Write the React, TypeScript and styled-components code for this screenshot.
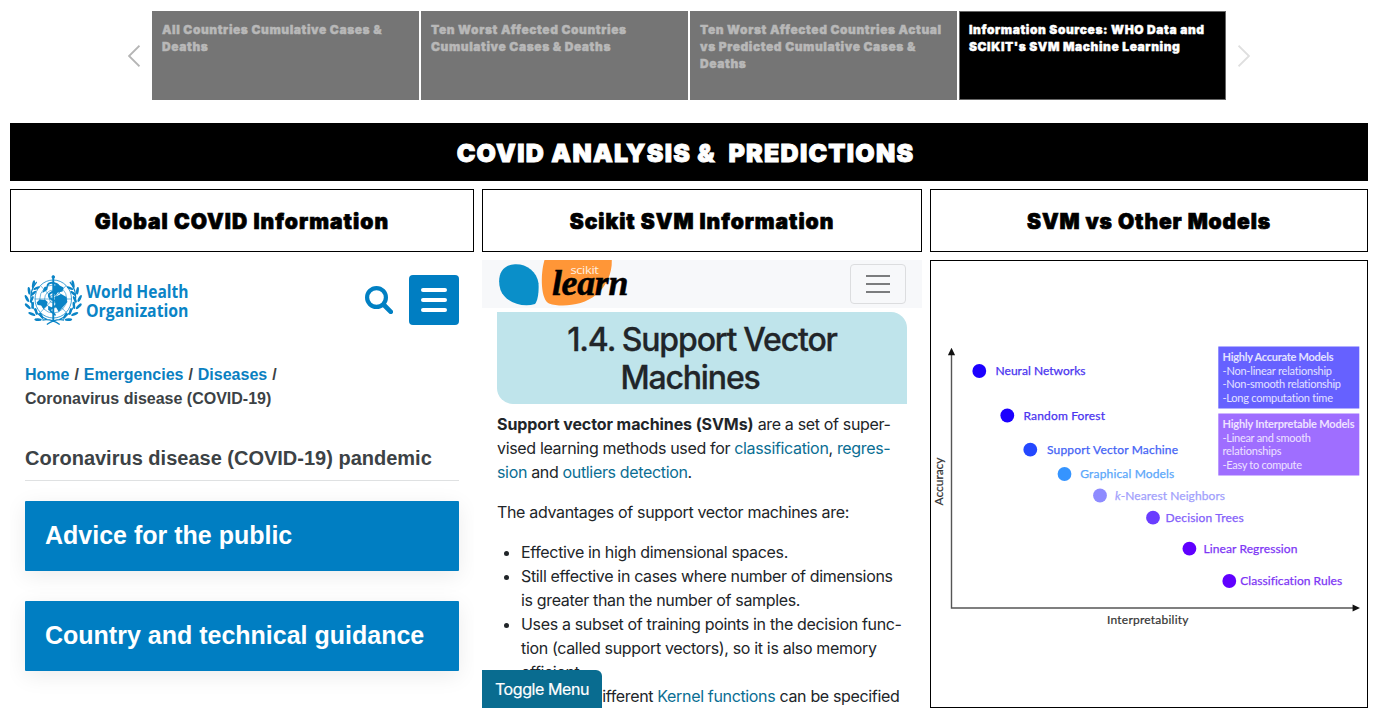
import React from "react";
import styled, { createGlobalStyle } from "styled-components";

const GlobalStyle = createGlobalStyle`
  * { box-sizing: border-box; }
  body { margin: 0; background: #fff; font-family: "Liberation Sans", Arial, sans-serif; }
  a { text-decoration: none; color: inherit; }
`;

const Dashboard = styled.main`
  width: 1377px;
  height: 722px;
  padding: 11px 9px 14px 10px;
  display: flex;
  flex-direction: column;
  overflow: hidden;
  background: #fff;
`;

const StoryNav = styled.nav`
  height: 89px;
  display: flex;
  justify-content: center;
  align-items: center;
  gap: 12px;
  flex: none;
`;

const Arrow = styled.svg<{ $color: string }>`
  width: 12px;
  height: 22px;
  fill: none;
  stroke: ${(p) => p.$color};
  stroke-width: 1.9;
`;

const Tabs = styled.div`
  display: flex;
  gap: 2px;
  height: 100%;
`;

const Tab = styled.div<{ $active?: boolean }>`
  width: 267px;
  height: 89px;
  padding: 9px;
  border: 1px solid ${(p) => (p.$active ? "#666" : "#757575")};
  background: ${(p) => (p.$active ? "#000" : "#757575")};
  color: ${(p) => (p.$active ? "#fff" : "#b8b8b8")};
  font: 900 12px/17px Inter, "Arial Black", sans-serif;
  letter-spacing: 0.58px;
  -webkit-text-stroke: 0.4px currentColor;
  white-space: pre-line;
`;

const Banner = styled.h1`
  margin: 23px 0 8px;
  height: 58px;
  flex: none;
  display: flex;
  align-items: center;
  justify-content: center;
  padding: 1px 7px 0 0;
  background: #000;
  color: #fff;
  font: 900 25px/34px Inter, "Arial Black", sans-serif;
  letter-spacing: 1.25px;
  -webkit-text-stroke: 0.9px currentColor;
  white-space: pre;
`;

const Columns = styled.div`
  display: grid;
  grid-template-columns: 464px 440px 438px;
  grid-template-rows: 63px 448px;
  gap: 8px;
`;

const Heading = styled.h2<{ $spacing: number }>`
  margin: 0;
  border: 1px solid #000;
  display: flex;
  align-items: center;
  justify-content: center;
  padding-top: 2px;
  font: 900 21px/30px Inter, "Arial Black", sans-serif;
  letter-spacing: ${(p) => p.$spacing}px;
  -webkit-text-stroke: 0.7px currentColor;
  color: #000;
`;

const WhoPanel = styled.section`
  padding: 15px;
  overflow: hidden;
  color: #3c4245;
`;

const WhoHeader = styled.header`
  display: flex;
  align-items: center;
  height: 50px;
`;

const WhoLogo = styled.svg`
  width: 166px;
  height: 50px;
  margin-right: auto;
  overflow: visible;
`;

const SearchIcon = styled.svg`
  width: 28px;
  height: 28px;
  margin-right: 16px;
  fill: none;
  stroke: #0180c3;
`;

const MenuButton = styled.button`
  width: 50px;
  height: 50px;
  padding: 0;
  border: 0;
  border-radius: 4px;
  background: #007ec2;
  display: flex;
  flex-direction: column;
  align-items: center;
  justify-content: center;
  gap: 6px;
`;

const MenuBar = styled.span`
  width: 26px;
  height: 4px;
  border-radius: 2px;
  background: #fff;
`;

const Breadcrumb = styled.div`
  margin-top: 38px;
  font-size: 16px;
  line-height: 24px;
  font-weight: 700;
`;

const Crumb = styled.a`
  color: #0a80c1;
`;

const Slash = styled.span`
  padding: 0 0.5px;
`;

const PageTitle = styled.h3`
  margin: 33px 0 20px;
  height: 37px;
  border-bottom: 1px solid #dfe1e2;
  font-size: 20px;
  line-height: 28px;
  font-weight: 700;
`;

const TopicLink = styled.a`
  display: flex;
  align-items: center;
  height: 70px;
  margin-bottom: 30px;
  padding: 0 20px 2px;
  background: #007ec2;
  color: #fff;
  font-size: 25px;
  font-weight: 700;
  white-space: nowrap;
  border-radius: 1px;
  box-shadow: 0 5px 22px rgba(0, 0, 0, 0.08);
`;

const ScikitPanel = styled.section`
  position: relative;
  overflow: hidden;
  color: #212529;
  font: 400 16px/24px Inter, sans-serif;
  letter-spacing: -0.34px;
`;

const ScikitHeader = styled.header`
  height: 48px;
  padding: 0 16px;
  display: flex;
  justify-content: space-between;
  align-items: center;
  background: #f7f8fa;
`;

const ScikitLogo = styled.svg`
  width: 134px;
  height: 48px;
`;

const Toggler = styled.button`
  width: 56px;
  height: 40px;
  padding: 0;
  border: 1px solid #dcdddf;
  border-radius: 4px;
  background: transparent;
  display: flex;
  flex-direction: column;
  align-items: center;
  justify-content: center;
  gap: 6px;
`;

const TogglerBar = styled.span`
  width: 24px;
  height: 2px;
  background: #7b7c7e;
`;

const TitleBox = styled.h3`
  margin: 4px 15px 0;
  height: 92px;
  padding-top: 9px;
  border-radius: 0 16px 0 16px;
  background: #bfe4eb;
  text-align: center;
  font-size: 32px;
  line-height: 38px;
  font-weight: 500;
  letter-spacing: -1.15px;
  word-spacing: -0.5px;
  -webkit-text-stroke: 0.3px currentColor;
`;

const TitleLine = styled.span<{ $trailing?: number }>`
  display: block;
  padding-right: ${(p) => p.$trailing ?? 0}px;
`;

const Paragraph = styled.p`
  margin: 8px 15px 16px;
  white-space: pre;
`;

const Strong = styled.b`
  letter-spacing: -0.09px;
`;

const List = styled.ul`
  margin: 0 0 0 15px;
  padding: 0 0 0 24px;
  white-space: pre;
`;

const Lead = styled.span`
  padding-right: 1px;
`;

const DocLink = styled.a`
  color: #0a6e93;
`;

const ToggleMenu = styled.button`
  position: absolute;
  left: 0;
  bottom: 0;
  width: 120px;
  height: 38px;
  padding: 0;
  border: 0;
  border-radius: 0 6px 0 0;
  background: #096c90;
  color: #fff;
  font: inherit;
  letter-spacing: -0.42px;
  -webkit-text-stroke: 0.2px currentColor;
`;

const ChartPanel = styled.section`
  border: 1px solid #000;
`;

const Chart = styled.svg`
  display: block;
  width: 436px;
  height: 446px;
  font-family: Lato, "Open Sans", sans-serif;
  font-variant-ligatures: none;
`;

const tabs = [
  "All Countries Cumulative Cases &\nDeaths",
  "Ten Worst Affected Countries\nCumulative Cases & Deaths",
  "Ten Worst Affected Countries Actual\nvs Predicted Cumulative Cases &\nDeaths",
  "Information Sources: WHO Data and\nSCIKIT's SVM Machine Learning",
];

type Model = { name: React.ReactNode; cx: number; cy: number; x: number; y: number; w: number; dot: string; text: string };

const models: Model[] = [
  { name: "Neural Networks", cx: 979.3, cy: 371, x: 995.5, y: 375.4, w: 90, dot: "#1c00ff", text: "#4a33f0" },
  { name: "Random Forest", cx: 1007.3, cy: 415.5, x: 1023.5, y: 419.6, w: 81.5, dot: "#1c00ff", text: "#4a33f0" },
  { name: "Support Vector Machine", cx: 1030.3, cy: 449.7, x: 1047, y: 454, w: 131, dot: "#2448ff", text: "#4463f5" },
  { name: "Graphical Models", cx: 1064.5, cy: 474, x: 1080.3, y: 478.4, w: 94, dot: "#3594ff", text: "#5ba7fa" },
  { name: <><tspan fontStyle="italic">k</tspan>-Nearest Neighbors</>, cx: 1100, cy: 495.5, x: 1115, y: 499.8, w: 110, dot: "#8e8bff", text: "#a29ffc" },
  { name: "Decision Trees", cx: 1153, cy: 517.7, x: 1165.6, y: 522, w: 78, dot: "#6a3dff", text: "#8460fa" },
  { name: "Linear Regression", cx: 1189.4, cy: 548.7, x: 1203.4, y: 553.1, w: 94, dot: "#6000ff", text: "#7d35f5" },
  { name: "Classification Rules", cx: 1229.3, cy: 581, x: 1240.2, y: 585.2, w: 102, dot: "#6000ff", text: "#7d35f5" },
];

const notes = [
  { y: 346.5, fill: "#6661ff", ink: "#e3e2ff", lines: [["Highly Accurate Models", 111], ["-Non-linear relationship", 109.5], ["-Non-smooth relationship", 118.5], ["-Long computation time", 110.5]] },
  { y: 413.5, fill: "#9f6eff", ink: "#eee2ff", lines: [["Highly Interpretable Models", 132], ["-Linear and smooth", 88.5], ["relationships", 59], ["-Easy to compute", 79.5]] },
] as const;

const leaves = [
  [9, 11, 40], [5, 17, 20], [3, 24, 0], [4, 31, -20], [8, 38, -40], [14, 43, -60],
];

const Emblem = () => (
  <g stroke="#0a84c6" fill="none" strokeWidth="0.8" transform="translate(1.100 0) scale(0.96 1)">
    <circle cx="28.3" cy="24" r="19" />
    <circle cx="28.3" cy="24" r="14" strokeWidth="0.6" />
    <circle cx="28.3" cy="24" r="9" strokeWidth="0.6" />
    <circle cx="28.3" cy="24" r="4" strokeWidth="0.6" />
    <path strokeWidth="0.6" d="M9.3 24h38M14.9 10.6l26.8 26.8M41.7 10.6L14.9 37.4" />
    <path fill="#0a84c6" stroke="none" d="M11 27.500l3-3 6 .5 2.500 2-1 4-3.500 3-2-3.500-4-.5zM29 11l4-1.500 6 3-1 4-5 1-2 3-3-2zM30 22l6.500-3 5.500 3 1 5-5.500 6-3.500 4-3.500-6zM19 12l4-1-1 4-5 3zM23 31l3 1-1 4-2-1z" />
    <path strokeWidth="2" d="M28.300 1v46" />
    <circle cx="28.3" cy="2" r="1.4" fill="#0a84c6" />
    <path strokeWidth="1.900" d="M22.300 11c0-3 4-4 8-2.500 5 1.500 5 6 0 7.500-5 1.500-8 3-6 6.500 2 3 8 2.500 8 6s-7 3.500-7 6.500 5 2.500 5 5.500" />
    {[1, -1].map((side) => (
      <g key={side} transform={side === 1 ? undefined : "translate(56.6 0) scale(-1 1)"}>
        <path strokeWidth="1.300" d="M11 7C1 18 3 38 22 44.500M17 45c6-1 13 1 18 4.500" />
        {leaves.map(([x, y, angle]) => (
          <g key={y} fill="#0a84c6" stroke="none" transform={`translate(${x} ${y}) rotate(${angle})`}>
            <ellipse cx="-1.700" cy="-1.500" rx="1.400" ry="3.900" transform="rotate(-28)" />
            <ellipse cx="2.700" cy="-1" rx="1.300" ry="3.600" transform="rotate(28)" />
          </g>
        ))}
      </g>
    ))}
  </g>
);

export default function App() {
  return (
    <>
      <GlobalStyle />
      <Dashboard>
        <StoryNav>
          <Arrow $color="#b5b5b5" viewBox="0 0 12 22"><path d="M11.500 .7L1 11l10.500 10.300" /></Arrow>
          <Tabs>
            {tabs.map((label, i) => (
              <Tab key={label} $active={i === 3}>{label}</Tab>
            ))}
          </Tabs>
          <Arrow $color="#dfdfdf" viewBox="0 0 12 22"><path d="M.5 .7L11 11 .5 21.300" /></Arrow>
        </StoryNav>
        <Banner>{"COVID ANALYSIS &  PREDICTIONS"}</Banner>
        <Columns>
          <Heading $spacing={1.04}>Global COVID Information</Heading>
          <Heading $spacing={0.95}>Scikit SVM Information</Heading>
          <Heading $spacing={0.88}>SVM vs Other Models</Heading>

          <WhoPanel>
            <WhoHeader>
              <WhoLogo viewBox="0 0 166 50">
                <Emblem />
                <g fill="#0a84c6" fontFamily="Open Sans" fontWeight="700" fontSize="18">
                  <text x="61" y="23" textLength="102.500" lengthAdjust="spacingAndGlyphs">World Health</text>
                  <text x="61" y="41.700" textLength="102.500" lengthAdjust="spacingAndGlyphs">Organization</text>
                </g>
              </WhoLogo>
              <SearchIcon viewBox="0 0 28 28">
                <circle cx="11.500" cy="11.500" r="9.400" strokeWidth="4.200" />
                <path d="M19 19l6.800 6.800" strokeWidth="4.600" strokeLinecap="round" />
              </SearchIcon>
              <MenuButton aria-label="Menu"><MenuBar /><MenuBar /><MenuBar /></MenuButton>
            </WhoHeader>
            <Breadcrumb>
              <Crumb>Home</Crumb> <Slash>/</Slash> <Crumb>Emergencies</Crumb> <Slash>/</Slash> <Crumb>Diseases</Crumb> <Slash>/</Slash>
              <br />
              Coronavirus disease (COVID-19)
            </Breadcrumb>
            <PageTitle>Coronavirus disease (COVID-19) pandemic</PageTitle>
            <TopicLink>Advice for the public</TopicLink>
            <TopicLink>Country and technical guidance</TopicLink>
          </WhoPanel>

          <ScikitPanel>
            <ScikitHeader>
              <ScikitLogo viewBox="0 0 134 48">
                <path fill="#0a8fc9" d="M37 44C24 48 7 42 2.500 30-1.500 17 3 5 17 4.200c11-.6 22 7 23.500 19 .5 8-.5 17-3.500 20.800z" />
                <path fill="#ff9637" d="M46.500 0h67.300c.5 14-6 27-16 35C86 45 64 48 51 43.500 43 40 42 15 46.500 0z" />
                <text x="72.500" y="14" fill="#fff0e2" fontFamily="Open Sans" fontSize="11" textLength="28" lengthAdjust="spacingAndGlyphs">scikit</text>
                <text x="54" y="35" fill="#000" stroke="#000" strokeWidth="0.500" fontFamily="Liberation Serif" fontStyle="italic" fontWeight="700" fontSize="35" textLength="76" lengthAdjust="spacingAndGlyphs">learn</text>
              </ScikitLogo>
              <Toggler aria-label="Toggle navigation"><TogglerBar /><TogglerBar /><TogglerBar /></Toggler>
            </ScikitHeader>
            <TitleBox>
              <TitleLine>1.4. Support Vector</TitleLine>
              <TitleLine $trailing={24}>Machines</TitleLine>
            </TitleBox>
            <Paragraph>
              <Strong>Support vector machines (SVMs)</Strong> are a set of super-{"\n"}
              vised learning methods used for <DocLink>classification</DocLink>, <DocLink>regres-{"\n"}sion</DocLink> and <DocLink>outliers detection</DocLink>.
            </Paragraph>
            <Paragraph>The advantages of support vector machines are:</Paragraph>
            <List>
              <li>Effective in high dimensional spaces.</li>
              <li>{"Still effective in cases where number of dimensions\nis greater than the number of samples."}</li>
              <li>{"Uses a subset of training points in the decision func-\ntion (called support vectors), so it is also memory\nefficient."}</li>
              <li><Lead>Versatile:</Lead> different <DocLink>Kernel functions</DocLink> can be specified</li>
            </List>
            <ToggleMenu>Toggle Menu</ToggleMenu>
          </ScikitPanel>

          <ChartPanel>
            <Chart viewBox="931 261 436 446">
              <path d="M951.500 353v255H1354" fill="none" stroke="#555" strokeWidth="1.400" />
              <path d="M951.500 347.800l3.600 7.400h-7.200zM1360 608l-7.400-3.500v7z" fill="#111" />
              {models.map((m) => (
                <g key={m.cx} fontSize="12">
                  <circle cx={m.cx} cy={m.cy} r="6.900" fill={m.dot} />
                  <text x={m.x} y={m.y} fill={m.text} stroke={m.text} strokeWidth="0.250" textLength={m.w}>{m.name}</text>
                </g>
              ))}
              {notes.map((n) => (
                <g key={n.y} fontSize="11" fill={n.ink}>
                  <rect x="1218.300" y={n.y} width="141" height="62" fill={n.fill} />
                  {n.lines.map(([line, w], i) => (
                    <text key={line} x="1222.500" y={n.y + 14.500 + i * 13.500} textLength={w} fontWeight={i === 0 ? 700 : 400}>{line}</text>
                  ))}
                </g>
              ))}
              <g fill="#333" stroke="#333" strokeWidth="0.200" fontSize="12">
                <text x="1107" y="624.300" textLength="81.500">Interpretability</text>
                <text transform="translate(942.500 505.500) rotate(-90)" textLength="48">Accuracy</text>
              </g>
            </Chart>
          </ChartPanel>
        </Columns>
      </Dashboard>
    </>
  );
}
